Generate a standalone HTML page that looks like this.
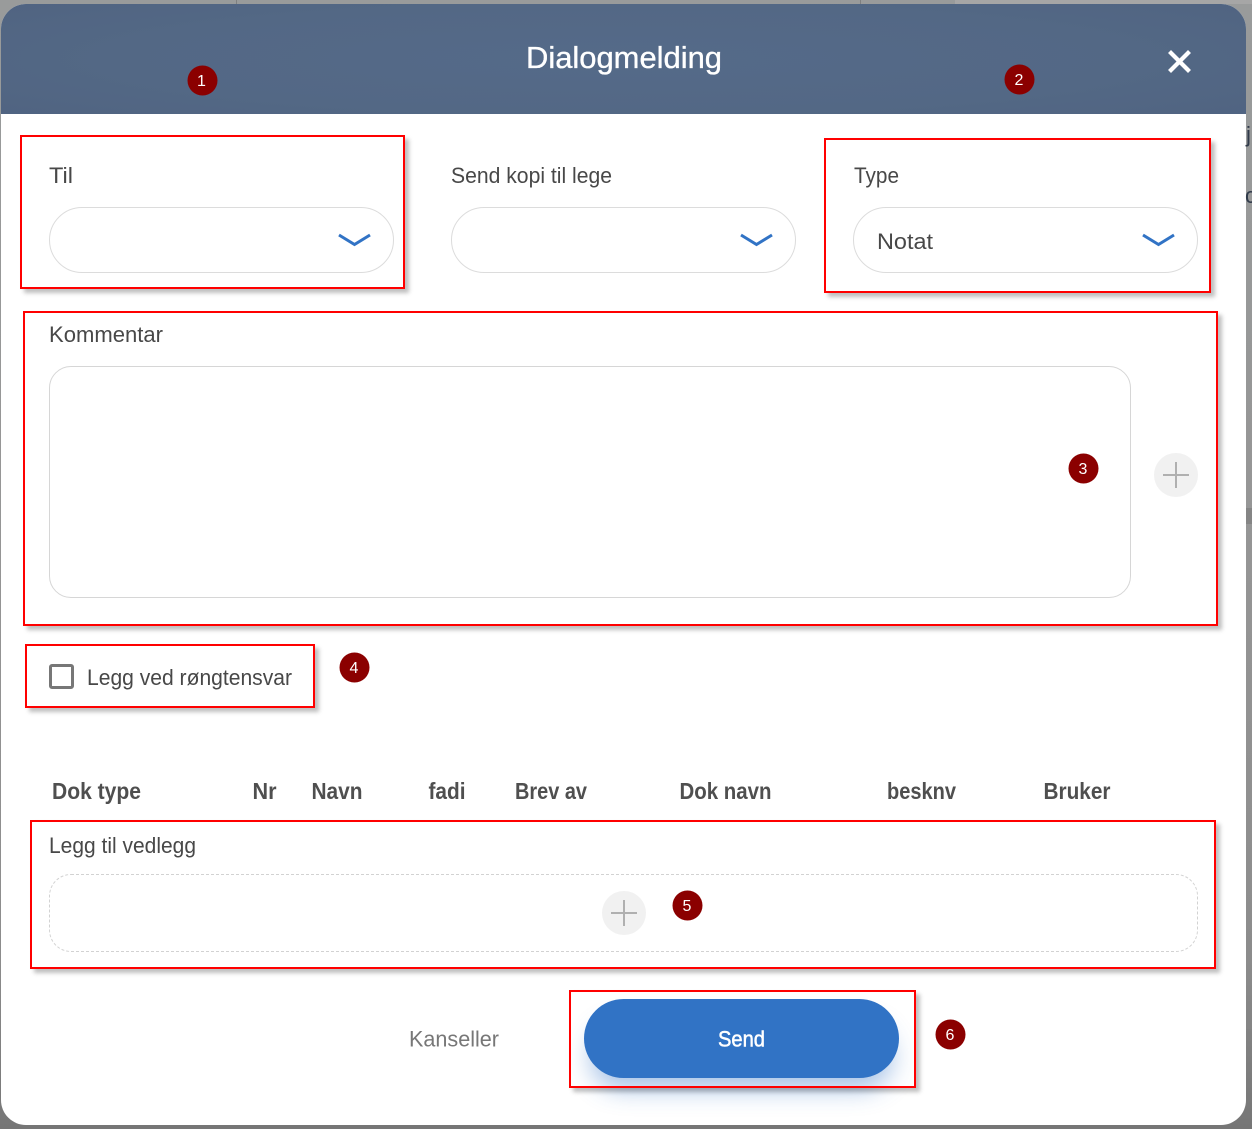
<!DOCTYPE html>
<html lang="no">
<head>
<meta charset="utf-8">
<title>Dialogmelding</title>
<style>
html,body{margin:0;padding:0;width:1252px;height:1129px;overflow:hidden;background:#959595;font-family:"Liberation Sans",sans-serif}
#bg{position:absolute;left:0;top:0;width:1252px;height:1129px;background:linear-gradient(#999b9b 0,#959595 50%,#8c8c8c 85%,#767676 100%)}
.a{position:absolute;box-sizing:border-box}
#modal{left:1px;top:4px;width:1245px;height:1121px;background:#fff;border-radius:25px;overflow:hidden}
#head{left:0;top:0;width:1245px;height:110px;background:radial-gradient(ellipse 75% 90% at 50% 50%,#556a89 0,#536885 55%,#4f6280 100%)}
.sel{height:66px;width:345px;top:207px;background:#fff;border:1px solid #dcdcdc;border-radius:33px}
.red{border:2px solid #f00;box-shadow:4px 4px 4px rgba(0,0,0,.25)}
.plus{width:44px;height:44px;border-radius:50%;background:#f1f1f1}
svg{position:absolute;left:0;top:0}
</style>
</head>
<body>
<div id="bg"></div>
<div class="a" style="left:236px;top:0;width:1px;height:4px;background:#7f8080"></div>
<div class="a" style="left:860px;top:0;width:1px;height:4px;background:#7f8080"></div>
<div class="a" style="left:955px;top:0;width:297px;height:4px;background:#a6a6a6"></div>
<div class="a" style="left:1246px;top:508px;width:6px;height:16px;background:#858585"></div>
<div class="a" style="left:1246px;top:1013px;width:6px;height:16px;background:#858585"></div>
<div class="a" id="modal"><div class="a" id="head"></div></div>

<div class="a sel" style="left:49px"></div>
<div class="a sel" style="left:451px"></div>
<div class="a sel" style="left:853px"></div>
<div class="a" style="left:49px;top:366px;width:1082px;height:232px;border:1px solid #d6d6d6;border-radius:22px;background:#fff"></div>
<div class="a plus" style="left:1154px;top:453px"></div>
<div class="a" style="left:49px;top:664px;width:25px;height:25px;border:3px solid #777;border-radius:3px;background:#fff"></div>
<div class="a" style="left:49px;top:873.500px;width:1149px;height:78.500px;border:1px dashed #d2d2d2;border-radius:22px;background:#fff"></div>
<div class="a plus" style="left:602px;top:891px"></div>
<div class="a" style="left:584px;top:999px;width:315px;height:79px;border-radius:40px;background:#3173c5;box-shadow:0 18px 24px -6px rgba(49,115,197,.42)"></div>

<div class="a red" style="left:20px;top:135px;width:385px;height:154px"></div>
<div class="a red" style="left:824px;top:138px;width:387px;height:155px"></div>
<div class="a red" style="left:23px;top:311px;width:1195px;height:315px"></div>
<div class="a red" style="left:25px;top:644px;width:290px;height:64px"></div>
<div class="a red" style="left:30px;top:820px;width:1186px;height:149px"></div>
<div class="a red" style="left:569px;top:990px;width:347px;height:98px"></div>

<svg width="1252" height="1129" viewBox="0 0 1252 1129" xmlns="http://www.w3.org/2000/svg" font-family="'Liberation Sans',sans-serif">
  <text x="526" y="68" font-size="31" fill="#fff" stroke="#fff" stroke-width=".35" textLength="196" lengthAdjust="spacingAndGlyphs">Dialogmelding</text>
  <path d="M1171 53L1188 70M1188 53L1171 70" stroke="#fff" stroke-width="4.200" stroke-linecap="square" fill="none"/>

  <g fill="#484848" font-size="22">
    <text x="49" y="183" textLength="24" lengthAdjust="spacingAndGlyphs">Til</text>
    <text x="451" y="183" textLength="161" lengthAdjust="spacingAndGlyphs">Send kopi til lege</text>
    <text x="854" y="183" textLength="45" lengthAdjust="spacingAndGlyphs">Type</text>
    <text x="877" y="249" textLength="56" lengthAdjust="spacingAndGlyphs">Notat</text>
    <text x="49" y="342" textLength="114" lengthAdjust="spacingAndGlyphs">Kommentar</text>
    <text x="87" y="685" textLength="205" lengthAdjust="spacingAndGlyphs">Legg ved røngtensvar</text>
    <text x="49" y="853" textLength="147" lengthAdjust="spacingAndGlyphs">Legg til vedlegg</text>
  </g>

  <g fill="none" stroke="#3173c5" stroke-width="3">
    <path d="M339 235L354.500 244.500L370 235"/>
    <path d="M741 235L756.500 244.500L772 235"/>
    <path d="M1143 235L1158.500 244.500L1174 235"/>
  </g>

  <g stroke="#b0b0b0" stroke-width="2" fill="none">
    <path d="M1176 462V488M1163 475H1189"/>
    <path d="M624 900V926M611 913H637"/>
  </g>

  <g fill="#4f4f4f" font-size="23" font-weight="bold">
    <text x="52" y="799" textLength="89" lengthAdjust="spacingAndGlyphs">Dok type</text>
    <text x="252.500" y="799" textLength="24" lengthAdjust="spacingAndGlyphs">Nr</text>
    <text x="311.500" y="799" textLength="51" lengthAdjust="spacingAndGlyphs">Navn</text>
    <text x="428.500" y="799" textLength="37" lengthAdjust="spacingAndGlyphs">fadi</text>
    <text x="515" y="799" textLength="72" lengthAdjust="spacingAndGlyphs">Brev av</text>
    <text x="679.500" y="799" textLength="92" lengthAdjust="spacingAndGlyphs">Dok navn</text>
    <text x="887" y="799" textLength="69" lengthAdjust="spacingAndGlyphs">besknv</text>
    <text x="1043.500" y="799" textLength="67" lengthAdjust="spacingAndGlyphs">Bruker</text>
  </g>

  <text x="409" y="1046.500" font-size="22" fill="#777" textLength="90" lengthAdjust="spacingAndGlyphs">Kanseller</text>
  <text x="718" y="1046.500" font-size="22" fill="#fff" stroke="#fff" stroke-width=".5" textLength="47" lengthAdjust="spacingAndGlyphs">Send</text>

  <g fill="#8b0000">
    <circle cx="202.500" cy="80.500" r="15"/>
    <circle cx="1019.500" cy="79.500" r="15"/>
    <circle cx="1083.500" cy="468.500" r="15"/>
    <circle cx="354.500" cy="667.500" r="15"/>
    <circle cx="687.500" cy="905.500" r="15"/>
    <circle cx="950.500" cy="1034.500" r="15"/>
  </g>
  <g fill="#fff" font-size="16" text-anchor="middle">
    <text x="201.500" y="86">1</text>
    <text x="1019" y="85">2</text>
    <text x="1083" y="474">3</text>
    <text x="354" y="673">4</text>
    <text x="687" y="911">5</text>
    <text x="950" y="1040">6</text>
  </g>

  <text x="1246" y="142" font-size="22" fill="#303a4a">j</text>
  <text x="1245" y="203" font-size="22" fill="#303a4a">c</text>
</svg>
</body>
</html>
